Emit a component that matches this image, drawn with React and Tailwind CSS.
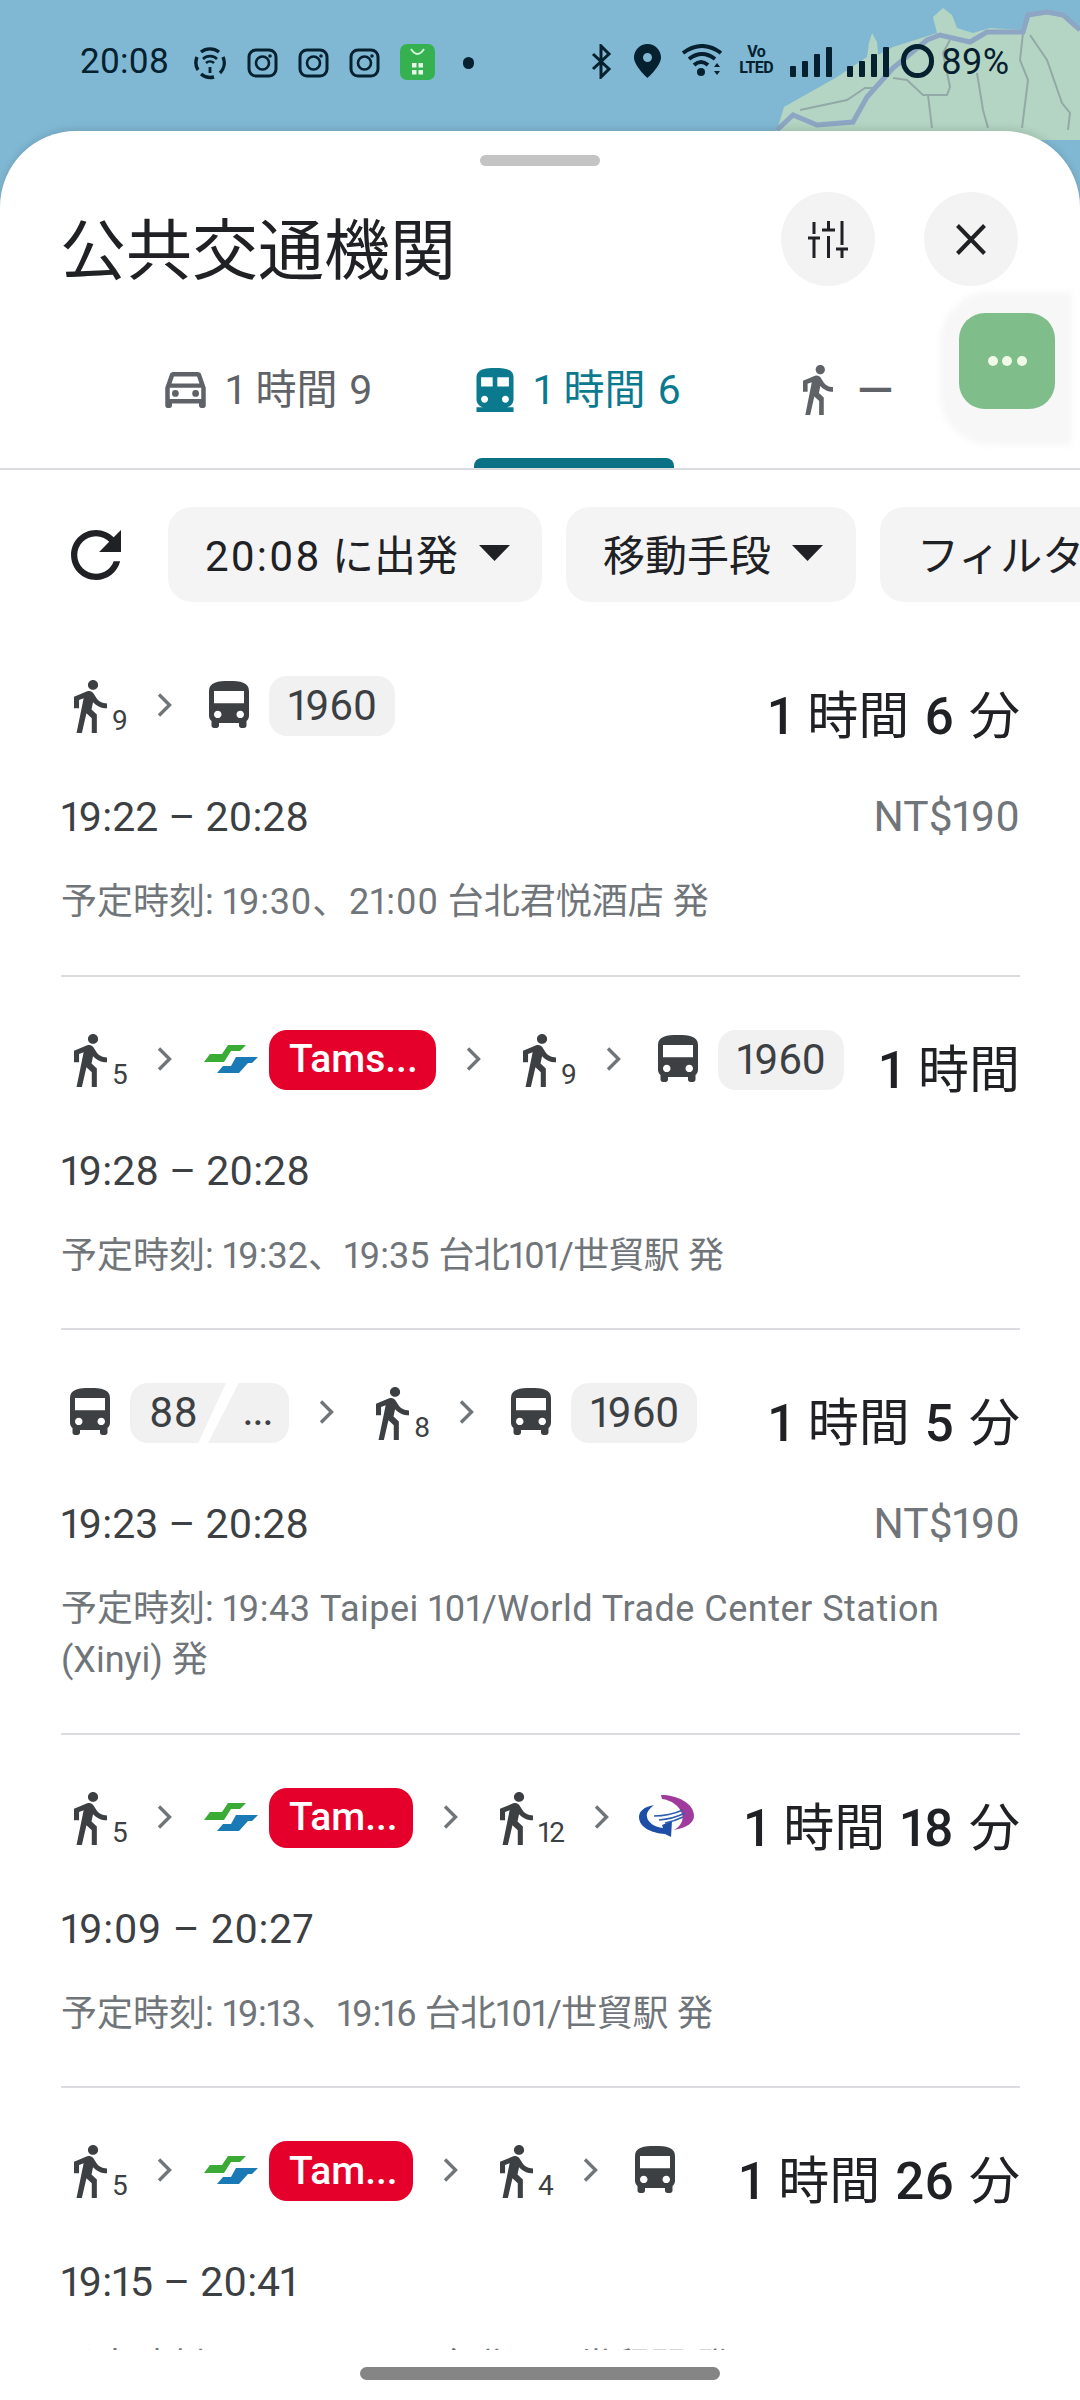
import React from "react";

const FONT = { fontFamily: 'Roboto, "Noto Sans CJK JP", sans-serif' };

const WALK = "M13.5 5.5c1.1 0 2-.9 2-2s-.9-2-2-2-2 .9-2 2 .9 2 2 2zM9.8 8.9L7 23h2.1l1.8-8 2.1 2v6h2v-7.5l-2.1-2 .6-3C14.8 12 16.8 13 19 13v-2c-1.9 0-3.5-1-4.3-2.4l-1-1.6c-.4-.6-1-1-1.7-1-.3 0-.5.1-.8.1L6 8.3V13h2V9.6l1.8-.7";
const BUS = "M4 16c0 .88.39 1.67 1 2.22V20c0 .55.45 1 1 1h1c.55 0 1-.45 1-1v-1h8v1c0 .55.45 1 1 1h1c.55 0 1-.45 1-1v-1.78c.61-.55 1-1.34 1-2.22V6c0-3.5-3.58-4-8-4s-8 .5-8 4v10zm3.5 1c-.83 0-1.5-.67-1.5-1.5S6.67 14 7.5 14s1.5.67 1.5 1.5S8.33 17 7.5 17zm9 0c-.83 0-1.5-.67-1.5-1.5s.67-1.5 1.5-1.5 1.5.67 1.5 1.5-.67 1.5-1.5 1.5zm1.5-6H6V6h12v5z";

function WalkIcon({ className, color = "#3c4043" }) {
  return (
    <svg viewBox="6 1.5 13 21.5" className={className} preserveAspectRatio="none">
      <path d={WALK} fill={color} />
    </svg>
  );
}

function BusIcon() {
  return (
    <svg viewBox="4 2 16 19" className="w-[40px] h-[47px]" preserveAspectRatio="none">
      <path d={BUS} fill="#3c4043" />
    </svg>
  );
}

function Walk({ n }) {
  return (
    <div className="flex items-end gap-[5px] ml-[12px] mt-[4px] h-[53px] shrink-0">
      <WalkIcon className="w-[33px] h-[53px]" />
      <span className="text-[28px] leading-[27px] tracking-[-0.8px] text-[#3c4043] mb-[-1px]">{n}</span>
    </div>
  );
}

function Chevron() {
  return (
    <svg viewBox="0 0 15 24" className="w-[15px] h-[24px] mt-[17px] shrink-0">
      <path d="M2 1.5 L12.5 12 L2 22.5" fill="none" stroke="#70757a" strokeWidth="3.4" />
    </svg>
  );
}

function Bus() {
  return (
    <div className="ml-[7px] mt-[5px] shrink-0">
      <BusIcon />
    </div>
  );
}

function BusBadge({ label }) {
  return (
    <div className="flex items-start gap-[20px] ml-[7px] shrink-0">
      <div className="mt-[5px]">
        <BusIcon />
      </div>
      <div className="h-[60px] w-[126px] rounded-[18px] bg-[#f1f1f1] flex items-center justify-center text-[42px] tracking-[-0.5px] text-[#3c4043] leading-none">
        {label}
      </div>
    </div>
  );
}

function BusSplit() {
  return (
    <div className="flex items-start ml-[8px] shrink-0">
      <div className="mt-[5px] mr-[20px]">
        <BusIcon />
      </div>
      <div className="h-[60px] w-[96px] rounded-l-[18px] bg-[#f1f1f1] pl-[19px] flex items-center text-[42px] text-[#3c4043] leading-none [clip-path:polygon(0_0,100%_0,71%_100%,0_100%)]">
        88
      </div>
      <div className="h-[60px] w-[81px] ml-[-18px] rounded-r-[18px] bg-[#f1f1f1] pl-[35px] flex items-center text-[36px] font-medium text-[#3c4043] leading-none [clip-path:polygon(38%_0,100%_0,100%_100%,0_100%)]">
        ...
      </div>
    </div>
  );
}

function MetroLogo() {
  return (
    <svg viewBox="23 15 54 28" className="w-[54px] h-[28px]">
      <path d="M47 15 L65 15 L59 21 L50 21 L43 32 L23 32 L29 24 L41 24 Z" fill="#3aab35" />
      <path d="M55 27 L77 27 L71 33 L67 33 L58 43 L36 43 L42 36 L50 36 Z" fill="#1a7ab5" />
    </svg>
  );
}

function Metro({ label, w }) {
  return (
    <div className="flex items-start gap-[11px] ml-[2px] shrink-0">
      <div className="mt-[15px]">
        <MetroLogo />
      </div>
      <div className={`h-[60px] ${w} rounded-[18px] bg-[#e4002b] text-white pl-[20px] flex items-center text-[39px] font-medium leading-none`}>
        {label}
      </div>
    </div>
  );
}

function CircleLogo() {
  return (
    <div className="mt-[7px] shrink-0">
      <svg viewBox="10 10 56 44" className="w-[56px] h-[44px]">
        <path d="M32 10 C48 10 65 18 65 31 C65 38 57 43 45 45 C52 41 55 35 53 29 C51 21 42 15 33 14 Z" fill="#a03a9c" />
        <path d="M25 20 C14 22 10 27 10 32 C10 42 22 48 36 49 L42 52 L43 36 L33 40 L34 43 C26 42 19 38 18 32 C17 28 20 24 25 20 Z" fill="#1d4fa8" />
        <path d="M25 31 Q40 31 54 25 M30 35 Q44 34 56 28 M36 38 Q46 36 54 32" stroke="#2e5fae" strokeWidth="1.7" fill="none" />
      </svg>
    </div>
  );
}

function Duration({ children }) {
  return (
    <div className="ml-auto mt-[11px] text-[51px] leading-[60px] [word-spacing:2.5px] text-[#202124] whitespace-nowrap shrink-0">
      {children}
    </div>
  );
}

function Num({ children }) {
  return <span className="font-medium">{children}</span>;
}

function Row({ segs, dur, time, fare, sub, last }) {
  const withChevrons = [];
  segs.forEach((s, i) => {
    if (i > 0) withChevrons.push(<Chevron key={`c${i}`} />);
    withChevrons.push(<React.Fragment key={i}>{s}</React.Fragment>);
  });
  return (
    <div className={`pt-[53px] ${last ? "" : "pb-[46.5px] border-b-2 border-[#dadce0]"}`}>
      <div className="flex items-start gap-[30px] h-[60px] pl-[1px]">
        {withChevrons}
        <Duration>{dur}</Duration>
      </div>
      <div className="flex justify-between items-center h-[48px] mt-[57px] text-[41px] leading-[48px]">
        <span className="text-[#3c4043]">{time}</span>
        {fare && <span className="text-[42.5px] text-[#70757a]">{fare}</span>}
      </div>
      <div className="mt-[36px] text-[36px] leading-[51px] text-[#70757a]">{sub}</div>
    </div>
  );
}

function Caret() {
  return (
    <svg viewBox="0 0 31 16" className="w-[31px] h-[16px] shrink-0 mt-[-3px]">
      <path d="M0 0 H31 L15.5 16 Z" fill="#202124" />
    </svg>
  );
}

function Chip({ children, className }) {
  return (
    <div className={`h-[95px] rounded-[24px] bg-[#f4f4f4] flex items-center shrink-0 text-[42px] text-[#202124] whitespace-nowrap ${className}`}>
      {children}
    </div>
  );
}

function Instagram() {
  return (
    <svg viewBox="0 0 31 30" className="w-[31px] h-[30px]">
      <rect x="2" y="2" width="27" height="26" rx="7" fill="none" stroke="#05202f" strokeWidth="3" />
      <circle cx="15.5" cy="15" r="6.5" fill="none" stroke="#05202f" strokeWidth="2.6" />
      <circle cx="23" cy="8" r="1.8" fill="#05202f" />
    </svg>
  );
}

function StatusBar() {
  return (
    <div className="relative h-[131px] pt-[44px] pl-[80px] pr-[71px] flex items-start text-[#05202f]">
      <span className="text-[35px] leading-[36px] w-[113px]">20:08</span>
      <svg viewBox="0 0 34 34" className="w-[34px] h-[34px] mt-[2px]">
        <path d="M8 6 A14.5 14.5 0 0 1 26 6 M30 11 A14.5 14.5 0 0 1 27 27 M21 31 A14.5 14.5 0 0 1 8 28 M5 24 A14.5 14.5 0 0 1 4 11" fill="none" stroke="#05202f" strokeWidth="3.4" />
        <path d="M10 13 A10 10 0 0 1 24 13 M13 17 A6 6 0 0 1 21 17" fill="none" stroke="#05202f" strokeWidth="2.6" />
        <path d="M17 21 V27" stroke="#05202f" strokeWidth="2.8" />
      </svg>
      <div className="flex gap-[20px] ml-[20px] mt-[4px]">
        <Instagram />
        <Instagram />
        <Instagram />
      </div>
      <svg viewBox="0 0 35 36" className="w-[35px] h-[36px] ml-[20px]">
        <rect width="35" height="36" rx="7" fill="#35b24f" />
        <path d="M11 5 Q17.5 15 24 5" fill="none" stroke="#d7f5dc" strokeWidth="2" />
        <rect x="12" y="19" width="4.5" height="4.5" fill="#e8f9ea" />
        <rect x="18.5" y="19" width="4.5" height="4.5" fill="#e8f9ea" />
        <rect x="12" y="26" width="4.5" height="4.5" fill="#e8f9ea" />
        <rect x="18.5" y="26" width="4.5" height="4.5" fill="#e8f9ea" />
      </svg>
      <div className="w-[11px] h-[12px] rounded-full bg-[#05202f] ml-[28px] mt-[13px]" />
      <div className="ml-auto flex items-start">
        <svg viewBox="0 0 21 35" className="w-[21px] h-[35px]">
          <path d="M2 10 L18 25 L10 33 V2 L18 10 L2 25" fill="none" stroke="#05202f" strokeWidth="3" />
        </svg>
        <svg viewBox="0 0 27 34" className="w-[27px] h-[34px] ml-[22px]">
          <path fillRule="evenodd" d="M13.5 0 C6 0 0 6 0 13.5 C0 22 13.5 34 13.5 34 C13.5 34 27 22 27 13.5 C27 6 21 0 13.5 0 Z M13.5 9 A4.5 4.5 0 1 1 13.5 18 A4.5 4.5 0 1 1 13.5 9 Z" fill="#05202f" />
        </svg>
        <svg viewBox="0 0 42 33" className="w-[42px] h-[33px] ml-[20px]">
          <path d="M2 9 Q21 -5 40 9 M8 15 Q21 5 34 15 M13 21 Q20 15 27 21" fill="none" stroke="#05202f" strokeWidth="4" />
          <circle cx="20" cy="28" r="4" fill="#05202f" />
          <path d="M33 23 L36 19 L39 23 Z M33 27 L39 27 L36 31 Z" fill="#05202f" />
        </svg>
        <div className="ml-[14px] w-[38px] text-[16px] leading-[16px] font-bold text-center tracking-[-0.6px]">
          <div>Vo</div>
          <div>LTED</div>
        </div>
        {[0, 1].map((k) => (
          <svg key={k} viewBox="0 0 42 30" className="w-[42px] h-[30px] mt-[3px] ml-[15px]">
            <rect x="0" y="19" width="6" height="11" rx="1" fill="#05202f" />
            <rect x="12" y="14" width="6" height="16" rx="1" fill="#05202f" />
            <rect x="24" y="7" width="6" height="23" rx="1" fill="#05202f" />
            <rect x="36" y="0" width="6" height="30" rx="1" fill="#05202f" />
          </svg>
        ))}
        <div className="w-[33px] h-[34px] rounded-full border-[5px] border-[#05202f] ml-[12px]" />
        <span className="text-[36px] leading-[36px] ml-[7px]">89%</span>
      </div>
    </div>
  );
}

function Tab({ icon, label, color, className, active, labelClass = "text-[41px] ml-[20px] [word-spacing:1.5px]" }) {
  return (
    <div className={`flex flex-col shrink-0 ${className}`}>
      <div className="flex items-center h-[50px] shrink-0" style={{ color }}>
        {icon}
        <span className={`leading-[50px] whitespace-nowrap ${labelClass}`}>{label}</span>
      </div>
      {active && <div className="w-[200px] h-[10px] shrink-0 rounded-t-[8px] bg-[#0b7285] mt-auto ml-[-2px]" />}
    </div>
  );
}

export default function App() {
  return (
    <div style={FONT} className="relative w-[1080px] h-[2400px] overflow-hidden bg-[#80b8d3] proportional-nums">
      <svg viewBox="0 0 1080 140" className="absolute top-0 left-0 w-[1080px] h-[140px]">
        <path d="M770 140 L777 130 L784 107 L837 77 L867 57 L869 43 L872 33 L877 42 L878 55 L893 47 L937 33 L933 17 L943 8 L952 15 L957 28 L973 33 L990 28 L1023 30 L1027 17 L1043 10 L1060 12 L1080 28 V140 Z" fill="#b4d5c3" />
        <path d="M800 110 L847 100 L865 88 L875 88 M893 78 L907 80 L923 95 L928 95 L932 128 M927 95 L947 95 L950 87 L943 53 L950 40 M977 73 L983 110 L988 128 M1023 33 L1020 60 L1028 80 L1022 128 M1030 35 L1047 60 L1062 103 L1070 113 L1068 130" fill="none" stroke="#93a9a8" strokeWidth="2" />
        <path d="M777 130 L793 115 L817 125 L853 122 L867 97 L893 68 L927 40 L940 35 L970 42 L987 32 L1023 32 L1028 15 L1047 12 L1063 15 L1080 30" fill="none" stroke="#8da6c4" strokeWidth="5" />
      </svg>

      <StatusBar />

      <div className="relative h-[2269px] bg-white rounded-t-[76px] flex flex-col overflow-hidden shadow-[0_-2px_8px_rgba(0,0,0,0.12)]">
        <div className="w-[120px] h-[11px] rounded-full bg-[#c4c4c4] mt-[24px] mx-auto shrink-0" />

        <div className="flex items-start pl-[60px] pr-[62px] mt-[26px] shrink-0">
          <h1 className="text-[66px] leading-[69px] mt-[25px] font-normal text-[#202124]">公共交通機関</h1>
          <div className="ml-auto flex gap-[49px]">
            <div className="w-[94px] h-[94px] rounded-full bg-[#f3f3f3] flex items-center justify-center">
              <svg viewBox="0 0 40 37" className="w-[40px] h-[37px]" fill="none" stroke="#202124" strokeWidth="3">
                <path d="M6 1 V13 M0 17 H12 M6 17 V37 M20.5 0 V9 M14 9 H27 M20.5 15 V37 M34 0 V24 M28 28 H40 M34 28 V37" />
              </svg>
            </div>
            <div className="w-[94px] h-[94px] rounded-full bg-[#f3f3f3] flex items-center justify-center">
              <svg viewBox="0 0 30 31" className="w-[30px] h-[31px]" fill="none" stroke="#202124" strokeWidth="4">
                <path d="M1.5 1.5 L28.5 29.5 M28.5 1.5 L1.5 29.5" />
              </svg>
            </div>
          </div>
        </div>

        <div className="h-[184px] border-b-2 border-[#dadce0] flex pl-[165px] pt-[79px] shrink-0">
          <Tab
            className="w-[311px]"
            color="#5f6368"
            label="1 時間 9"
            icon={
              <svg viewBox="3 5 18 16" className="w-[41px] h-[36px]">
                <path d="M18.92 6.01C18.72 5.42 18.16 5 17.5 5h-11c-.66 0-1.21.42-1.42 1.01L3 12v8c0 .55.45 1 1 1h1c.55 0 1-.45 1-1v-1h12v1c0 .55.45 1 1 1h1c.55 0 1-.45 1-1v-8l-2.08-5.99zM6.85 7h10.29l1.08 3.11H5.77L6.85 7zM19 17H5v-5h14v5z" fill="#5f6368" />
                <circle cx="7.5" cy="14.5" r="1.5" fill="#5f6368" />
                <circle cx="16.5" cy="14.5" r="1.5" fill="#5f6368" />
              </svg>
            }
          />
          <Tab
            className="w-[327px]"
            color="#0b7a8f"
            active
            label="1 時間 6"
            icon={
              <svg viewBox="4 2 16 19" className="w-[38px] h-[44px]">
                <path d="M12 2c-4 0-8 .5-8 4v9.5C4 17.43 5.57 19 7.5 19H4v2h16v-2h-3.5c1.93 0 3.5-1.57 3.5-3.5V6c0-3.5-3.58-4-8-4zM7.5 17c-.83 0-1.5-.67-1.5-1.5S6.67 14 7.5 14s1.5.67 1.5 1.5S8.33 17 7.5 17zm3.5-7H6V6h5v4zm2 0V6h5v4h-5zm3.5 7c-.83 0-1.5-.67-1.5-1.5s.67-1.5 1.5-1.5 1.5.67 1.5 1.5-.67 1.5-1.5 1.5z" fill="#0b7a8f" />
              </svg>
            }
          />
          <Tab
            className="w-[120px]"
            color="#5f6368"
            label="—"
            labelClass="font-medium text-[47px] ml-[24px]"
            icon={<WalkIcon className="w-[30px] h-[50px]" color="#5f6368" />}
          />
        </div>

        <div className="flex items-center h-[95px] mt-[37px] overflow-hidden shrink-0">
          <svg viewBox="4 4 16 16" className="w-[50px] h-[50px] ml-[71px] mr-[47px] shrink-0">
            <path d="M17.65 6.35C16.2 4.9 14.21 4 12 4c-4.42 0-7.99 3.58-7.99 8s3.57 8 7.99 8c3.73 0 6.84-2.55 7.73-6h-2.08c-.82 2.33-3.04 4-5.65 4-3.31 0-6-2.69-6-6s2.69-6 6-6c1.66 0 3.14.69 4.22 1.78L13 11h7V4l-2.35 2.35z" fill="#202124" />
          </svg>
          <Chip className="w-[374px] pl-[37px] gap-[21px]">
            <span className="mt-[3px]">
              <span className="tracking-[1.9px]">20:08</span> に出発
            </span>
            <Caret />
          </Chip>
          <Chip className="w-[290px] pl-[37px] gap-[21px] ml-[24px]">
            <span className="mt-[3px]">移動手段</span>
            <Caret />
          </Chip>
          <Chip className="w-[260px] pl-[37px] ml-[24px]">
            <span className="mt-[3px]">フィルタ</span>
          </Chip>
        </div>

        <div className="flex-1 overflow-hidden pl-[61px] pr-[60px] mt-[21px]">
          <Row
            segs={[<Walk n="9" />, <BusBadge label="1960" />]}
            dur={<><Num>1</Num> 時間 <Num>6</Num> 分</>}
            time="19:22 – 20:28"
            fare="NT$190"
            sub={<>予定時刻: <span className="tracking-[0.7px]">19:30、21:00</span> 台北君悦酒店 発</>}
          />
          <Row
            segs={[<Walk n="5" />, <Metro label="Tams..." w="w-[167px]" />, <Walk n="9" />, <BusBadge label="1960" />]}
            dur={<><Num>1</Num> 時間</>}
            time="19:28 – 20:28"
            sub={<>予定時刻: 19:32、19:35 <span className="tracking-[-0.7px]">台北101/世貿駅</span> 発</>}
          />
          <Row
            segs={[<BusSplit />, <Walk n="8" />, <BusBadge label="1960" />]}
            dur={<><Num>1</Num> 時間 <Num>5</Num> 分</>}
            time="19:23 – 20:28"
            fare="NT$190"
            sub={<>予定時刻: <span className="tracking-[0.5px]">19:43 Taipei 101/World Trade Center Station</span><br />(Xinyi) 発</>}
          />
          <Row
            segs={[<Walk n="5" />, <Metro label="Tam..." w="w-[144px]" />, <Walk n="12" />, <CircleLogo />]}
            dur={<><Num>1</Num> 時間 <Num>18</Num> 分</>}
            time={<span className="tracking-[0.5px]">19:09 – 20:27</span>}
            sub={<>予定時刻: <span className="tracking-[-0.4px]">19:13、19:16 台北101/世貿駅</span> 発</>}
          />
          <Row
            last
            segs={[<Walk n="5" />, <Metro label="Tam..." w="w-[144px]" />, <Walk n="4" />, <Bus />]}
            dur={<><Num>1</Num> 時間 <Num>26</Num> 分</>}
            time="19:15 – 20:41"
            sub="予定時刻: 19:20、19:23 台北101/世貿駅 発"
          />
        </div>

        <div className="h-[50px] shrink-0 flex justify-center pt-[17px]">
          <div className="w-[360px] h-[13px] rounded-full bg-[#858585]" />
        </div>
      </div>

      <div className="absolute left-[940px] top-[292px] w-[132px] h-[153px] rounded-l-[50px] bg-[#f7f7f7] blur-[3px]" />
      <div className="absolute left-[959px] top-[313px] w-[96px] h-[96px] rounded-[26px] bg-[#7fbd8a] flex items-center justify-center gap-[4.5px]">
        <span className="w-[10px] h-[10px] rounded-full bg-[#f0f8e6]" />
        <span className="w-[10px] h-[10px] rounded-full bg-[#f0f8e6]" />
        <span className="w-[10px] h-[10px] rounded-full bg-[#f0f8e6]" />
      </div>
    </div>
  );
}
